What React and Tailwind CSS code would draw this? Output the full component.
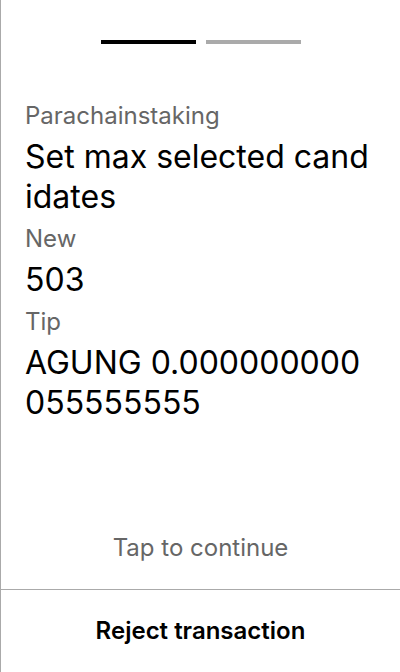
import React from "react";

const fields = [
  { label: "Parachainstaking", value: "Set max selected candidates" },
  { label: "New", value: "503" },
  { label: "Tip", value: "AGUNG 0.000000000055555555" },
];

export default function App() {
  return (
    <div
      className="flex h-[672px] w-[400px] flex-col border-l border-[#aaaaaa] bg-white text-black"
      style={{ fontFamily: "Inter, 'Noto Sans', sans-serif" }}
    >
      <div className="flex justify-center gap-[10px] pt-10">
        <div className="h-1 w-[95px] bg-black" />
        <div className="h-1 w-[95px] bg-[#aaaaaa]" />
      </div>

      <div className="flex-1 pl-6 pr-[25px] pt-[57px]">
        {fields.map((f) => (
          <div key={f.label} className="mb-[7px]">
            <div className="mb-[6px] text-[24px] leading-[30px] text-[#666666]">
              {f.label}
            </div>
            <div className="break-all text-[32px] leading-[40px]">
              {f.value}
            </div>
          </div>
        ))}
      </div>

      <div className="mb-[26px] text-center text-[24px] leading-[30px] text-[#666666]">
        Tap to continue
      </div>
      <div className="flex h-[83px] items-center justify-center border-t border-[#aaaaaa]">
        <span className="text-[24px] font-semibold leading-[30px]">
          Reject transaction
        </span>
      </div>
    </div>
  );
}
